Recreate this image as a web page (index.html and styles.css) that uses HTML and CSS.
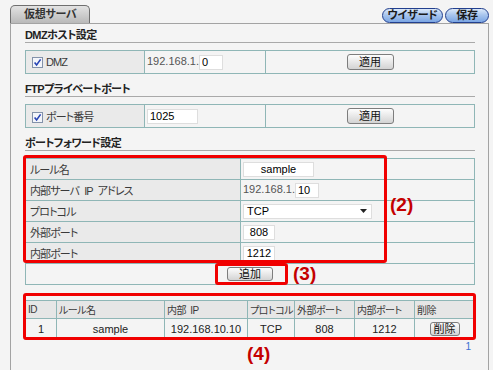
FILE: index.html
```html
<!DOCTYPE html>
<html lang="ja">
<head>
  <meta charset="UTF-8">
  <meta name="viewport" content="width=device-width, initial-scale=1.0">
  <title>仮想サーバ</title>
  <link rel="stylesheet" href="styles.css">
</head>
<body>
  <div class="tabbar">
    <div class="tab">仮想サーバ</div>
    <div class="actions">
      <button class="pill pill-wizard">ウイザード</button>
      <button class="pill pill-save">保存</button>
    </div>
  </div>

  <div class="panel">
    <h2>DMZホスト設定</h2>
    <table class="settings">
      <colgroup><col class="c-label"><col class="c-value"><col></colgroup>
      <tr>
        <td class="label">
          <svg class="check" width="11" height="11" viewBox="0 0 11 11"><rect x="0.5" y="0.5" width="10" height="10" fill="#f3f5fa" stroke="#8392aa"/><path d="M2.6 5.4 L4.6 8 L8.6 2.4" fill="none" stroke="#2744b5" stroke-width="1.6"/></svg>DMZ
        </td>
        <td class="value"><span class="ip">192.168.1.</span><input class="field octet" type="text" value="0"></td>
        <td class="action"><button class="btn btn-apply">適用</button></td>
      </tr>
    </table>

    <h2>FTPプライベートポート</h2>
    <table class="settings">
      <colgroup><col class="c-label"><col class="c-value"><col></colgroup>
      <tr>
        <td class="label">
          <svg class="check" width="11" height="11" viewBox="0 0 11 11"><rect x="0.5" y="0.5" width="10" height="10" fill="#f3f5fa" stroke="#8392aa"/><path d="M2.6 5.4 L4.6 8 L8.6 2.4" fill="none" stroke="#2744b5" stroke-width="1.6"/></svg>ポート番号
        </td>
        <td class="value"><input class="field port" type="text" value="1025"></td>
        <td class="action"><button class="btn btn-apply">適用</button></td>
      </tr>
    </table>

    <h2>ポートフォワード設定</h2>
    <table class="form">
      <colgroup><col class="c-form-label"><col></colgroup>
      <tr>
        <td class="label">ルール名</td>
        <td class="value"><input class="field name centered" type="text" value="sample"></td>
      </tr>
      <tr>
        <td class="label">内部サーバ IP アドレス</td>
        <td class="value"><span class="ip">192.168.1.</span><input class="field octet" type="text" value="10"></td>
      </tr>
      <tr>
        <td class="label">プロトコル</td>
        <td class="value">
          <div class="select">
            <span>TCP</span>
            <svg width="7" height="4" viewBox="0 0 7 4"><path d="M0 0 H7 L3.5 4 Z" fill="#222"/></svg>
          </div>
        </td>
      </tr>
      <tr>
        <td class="label">外部ポート</td>
        <td class="value"><input class="field short centered" type="text" value="808"></td>
      </tr>
      <tr>
        <td class="label">内部ポート</td>
        <td class="value"><input class="field short centered" type="text" value="1212"></td>
      </tr>
      <tr>
        <td class="submit" colspan="2"><button class="btn btn-add">追加</button></td>
      </tr>
    </table>

    <table class="rules">
      <colgroup>
        <col class="c-id"><col class="c-name"><col class="c-ip"><col class="c-proto">
        <col class="c-port"><col class="c-port"><col class="c-del">
      </colgroup>
      <tr class="head">
        <td>ID</td>
        <td>ルール名</td>
        <td>内部 IP</td>
        <td>プロトコル</td>
        <td>外部ポート</td>
        <td>内部ポート</td>
        <td>削除</td>
      </tr>
      <tr class="row">
        <td>1</td>
        <td>sample</td>
        <td>192.168.10.10</td>
        <td>TCP</td>
        <td>808</td>
        <td>1212</td>
        <td><button class="btn btn-del">削除</button></td>
      </tr>
    </table>

    <div class="pager"><a href="#">1</a></div>
  </div>

  <!-- annotation marks drawn over the screen -->
  <div class="mark mark-form"></div>
  <div class="mark mark-add"></div>
  <div class="mark mark-list"></div>
  <span class="mark-no no-form">(2)</span>
  <span class="mark-no no-add">(3)</span>
  <span class="mark-no no-list">(4)</span>
</body>
</html>
```

FILE: styles.css
```css
:root {
  --bg: #f4f4f4;
  --cell: #f4f4f4;
  --label: #eaeaea;
  --line: #8fb6b6;
  --text: #3a3a3a;
  --mark: #f00000;
  --mark-text: #c40000;
}

* {
  margin: 0;
  padding: 0;
  box-sizing: border-box;
}

body {
  position: relative;
  width: 493px;
  height: 370px;
  overflow: hidden;
  background-color: var(--bg);
  color: var(--text);
  font-family: "Liberation Sans", "Noto Sans CJK JP", sans-serif;
  font-size: 11px;
  font-feature-settings: "palt";
}

button, input {
  font-family: inherit;
  font-size: 11px;
  font-feature-settings: "palt";
}

/* tab row */
.tabbar {
  display: flex;
  justify-content: space-between;
  align-items: flex-end;
  height: 23px;
  padding: 0 4px 0 10px;
}

.tab {
  width: 80px;
  height: 18px;
  padding-left: 13px;
  border: 1px solid #6f6f6f;
  border-bottom: none;
  border-radius: 5px 5px 0 0;
  background: linear-gradient(#e3e3e3, #b9b9b9);
  font-weight: 700;
  line-height: 17px;
  letter-spacing: -0.3px;
  color: #333;
}

.actions {
  display: flex;
  gap: 2px;
}

.pill {
  height: 15px;
  border: 1px solid #223f8e;
  border-radius: 8px;
  background: linear-gradient(#dce9f9, #a9c6ee 45%, #7aa5e3);
  font-weight: 700;
  line-height: 13px;
  letter-spacing: -0.3px;
  color: #1a1a1a;
}

.pill-wizard { width: 61px; }
.pill-save { width: 44px; }

/* main panel */
.panel {
  width: 479px;
  height: 347px;
  margin-left: 10px;
  padding: 4px 13px 0 14px;
  border: 1px solid #a3a3a3;
  border-bottom: none;
  background-color: var(--bg);
}

h2 {
  font-size: 11px;
  font-weight: 700;
  line-height: 14px;
  letter-spacing: -0.6px;
  color: #222;
  border-bottom: 1px solid #a9a9a9;
}

table + h2 {
  margin-top: 8px;
}

table {
  width: 100%;
  border-collapse: collapse;
  table-layout: fixed;
}

td {
  border: 1px solid var(--line);
  background-color: var(--cell);
  white-space: nowrap;
}

.settings {
  margin-top: 7px;
}

.settings td {
  height: 23px;
}

.c-label { width: 119px; }
.c-value { width: 121px; }

.label {
  letter-spacing: -0.9px;
  word-spacing: 3px;
}

.settings .label {
  padding-left: 6px;
  background-color: var(--label);
}

.check {
  margin-right: 3px;
  vertical-align: -2px;
}

.value {
  padding-left: 2px;
}

.ip {
  color: #555;
}

.field {
  height: 15px;
  padding: 0 2px;
  border: 1px solid #dedede;
  background-color: #fff;
  color: #000;
  vertical-align: middle;
  outline: none;
}

.centered { text-align: center; }

.octet { width: 24px; }
.port { width: 51px; }
.name { width: 71px; }
.short { width: 32px; }

.action {
  text-align: center;
}

.btn {
  height: 16px;
  border: 1px solid #7d7d7d;
  border-radius: 3px;
  background: linear-gradient(#fdfdfd, #d3d3d3);
  color: #111;
  line-height: 14px;
}

.btn-apply { width: 47px; }
.btn-add { width: 46px; height: 14px; line-height: 12px; }
.btn-del { width: 30px; height: 14px; line-height: 12px; }

/* port forward form */
.form {
  margin-top: 7px;
}

.form td {
  height: 21px;
}

.c-form-label { width: 215px; }

.form .label {
  padding-left: 4px;
  background-color: var(--label);
}

.select {
  display: flex;
  align-items: center;
  justify-content: space-between;
  width: 129px;
  height: 15px;
  padding: 0 4px 0 3px;
  border: 1px solid #dedede;
  background-color: #fff;
  color: #000;
}

.submit {
  text-align: center;
}

/* rule list */
.rules {
  margin-top: 15px;
}

.c-id { width: 31px; }
.c-name { width: 108px; }
.c-ip { width: 83px; }
.c-proto { width: 47px; }
.c-port { width: 60px; }
.c-del { width: 60px; }

.rules .head td {
  height: 18px;
  padding-left: 2px;
  font-size: 10px;
  letter-spacing: -0.5px;
  word-spacing: 2px;
  background-color: #e6e6e6;
}

.rules .row td {
  height: 20px;
  text-align: center;
  color: #222;
}

.pager {
  margin-top: 2px;
  padding-right: 4px;
  text-align: right;
  font-size: 10px;
}

.pager a {
  color: #3b6fd2;
  text-decoration: none;
}

/* red annotation marks */
.mark {
  position: absolute;
  border: 3px solid var(--mark);
  border-radius: 3px;
}

.mark-form { left: 23px; top: 155px; width: 364px; height: 108px; }
.mark-add { left: 215px; top: 263px; width: 73px; height: 22px; }
.mark-list { left: 23px; top: 293px; width: 453px; height: 47px; }

.mark-no {
  position: absolute;
  font-size: 19px;
  font-weight: 700;
  line-height: 19px;
  color: var(--mark-text);
}

.no-form { left: 390px; top: 195px; }
.no-add { left: 293px; top: 264px; }
.no-list { left: 247px; top: 344px; }
```
